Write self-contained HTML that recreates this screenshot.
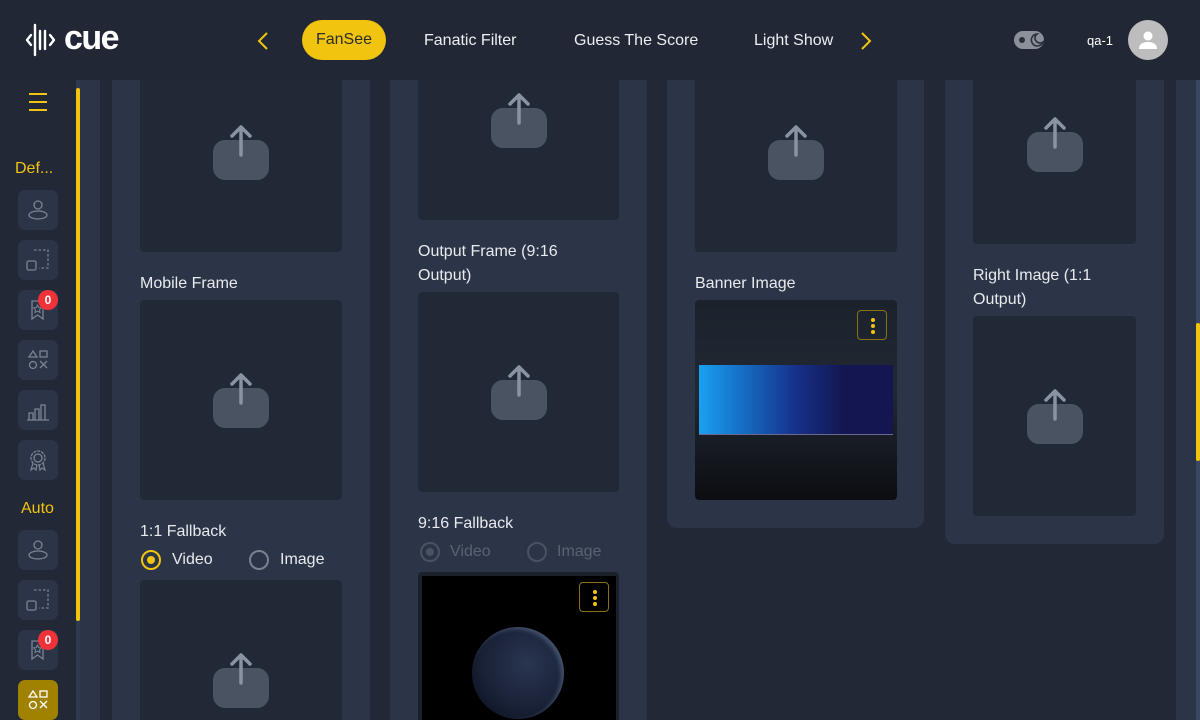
<!DOCTYPE html>
<html><head><meta charset="utf-8"><style>
*{box-sizing:border-box;margin:0;padding:0}
html,body{width:1200px;height:720px;overflow:hidden}
body{background:#222836;font-family:"Liberation Sans",sans-serif;position:relative;color:#e8eaee}
.a{position:absolute}
.hdr{left:0;top:0;width:1200px;height:80px;background:#212734;z-index:5}
.hz{z-index:6}
.nav{font-size:16px;color:#eceef2;top:32px}
.main{position:absolute;left:0;top:80px;width:1200px;height:640px;overflow:hidden}
.m{position:absolute;left:0;top:-80px;width:1200px;height:720px;overflow:hidden}
.card{background:#2c3547;border-radius:0 0 10px 10px}
.box{background:#222936;border-radius:4px}
.box svg{position:absolute;left:50%;top:50%;margin-left:-28px;margin-top:-28px}
.lbl{font-size:16px;color:#e8eaee;line-height:24px}
.sb{width:40px;height:40px;left:18px;background:#2c3547;border-radius:7px}
.sb svg{position:absolute;left:8px;top:8px}
.badge{width:20px;height:20px;border-radius:10px;background:#f0323a;color:#fff;font-size:12px;text-align:center;line-height:20px;font-weight:bold}
.rad{width:20px;height:20px;border-radius:50%;border:2px solid #7b828e}
.kebab{width:30px;height:30px;border:1px solid #8a7114;border-radius:4px}
.kebab i{position:absolute;left:13px;width:4px;height:4px;border-radius:2px;background:#f1c40f}
</style></head><body>
<svg width="0" height="0" style="position:absolute"><defs>
<g id="up"><rect x="0" y="16" width="56" height="40" rx="12" fill="#4a5362"/><path d="M28 31V4M19 12l9-9 9 9" stroke="#8a93a3" stroke-width="3.5" fill="none" stroke-linecap="round" stroke-linejoin="round"/></g>
</defs></svg>

<div class="a hdr"></div>
<svg class="a hz" style="left:25px;top:22px" width="100" height="36" viewBox="0 0 100 36">
<path d="M6 13l-4 5 4 5M10 3v30M15 9v18M20 9v18M25 13l4 5-4 5" stroke="#fff" stroke-width="2.4" fill="none" stroke-linecap="round" stroke-linejoin="round"/>
<text x="39" y="27" font-family="Liberation Sans" font-weight="bold" font-size="34" fill="#fff" letter-spacing="-1.5">cue</text>
</svg>
<svg class="a hz" style="left:257px;top:32px" width="12" height="18"><path d="M10 1L2 9l8 8" stroke="#f1c40f" stroke-width="2" fill="none"/></svg>
<div class="a hz" style="left:302px;top:20px;width:84px;height:40px;border-radius:20px;background:#f1c40f;color:#2b2b2b;font-size:16px;text-align:center;line-height:40px">FanSee</div>
<div class="a nav hz" style="left:424px">Fanatic Filter</div>
<div class="a nav hz" style="left:574px">Guess The Score</div>
<div class="a nav hz" style="left:754px">Light Show</div>
<svg class="a hz" style="left:860px;top:32px" width="12" height="18"><path d="M2 1l8 8-8 8" stroke="#f1c40f" stroke-width="2" fill="none"/></svg>
<div class="a hz" style="left:1014px;top:31px;width:30px;height:18px;border-radius:9px;background:#8b909a"></div>
<div class="a hz" style="left:1019px;top:37px;width:6px;height:6px;border-radius:3px;background:#2a2f3a"></div>
<svg class="a hz" style="left:1028px;top:32px" width="16" height="16"><path d="M9 2a6 6 0 1 0 6 8a5 5 0 0 1-6-8z" fill="none" stroke="#2a2f3a" stroke-width="1.6"/></svg>
<div class="a hz" style="left:1087px;top:33px;font-size:13px;color:#fff">qa-1</div>
<div class="a hz" style="left:1128px;top:20px;width:40px;height:40px;border-radius:50%;background:#bdbdbd"></div>
<svg class="a hz" style="left:1136px;top:28px" width="24" height="24"><circle cx="12" cy="8" r="4.5" fill="#fff"/><path d="M3 21c0-5 4-7 9-7s9 2 9 7z" fill="#fff"/></svg>

<div class="main"><div class="m">
<div class="a" style="left:76px;top:80px;width:4px;height:640px;background:#2f3a4f"></div>
<div class="a" style="left:76px;top:88px;width:4px;height:533px;background:#f1c40f;border-radius:2px"></div>
<div class="a" style="left:80px;top:80px;width:20px;height:640px;background:#2c3547"></div>
<div class="a" style="left:29px;top:93px;width:18px;height:2px;background:#f1c40f;box-shadow:0 8px 0 #f1c40f,0 16px 0 #f1c40f"></div>
<div class="a" style="left:15px;top:160px;font-size:16px;color:#f1c40f">Def...</div>
<div class="a sb" style="top:190px"><svg width="24" height="24"><circle cx="12" cy="7" r="4" fill="none" stroke="#7b8392" stroke-width="1.3"/><ellipse cx="12" cy="17" rx="9" ry="4" fill="none" stroke="#7b8392" stroke-width="1.3"/></svg></div>
<div class="a sb" style="top:240px"><svg width="24" height="24"><rect x="1" y="13" width="9" height="9" rx="1.5" fill="none" stroke="#7b8392" stroke-width="1.3"/><path d="M8 2h14v18h-9" fill="none" stroke="#7b8392" stroke-width="1.3" stroke-dasharray="2.5 2"/></svg></div>
<div class="a sb" style="top:290px"><svg width="24" height="24"><path d="M6 3h11v18l-5.5-4L6 21z" fill="none" stroke="#7b8392" stroke-width="1.3"/><path d="M11.5 7l1.3 2.6 2.7.3-2 1.9.5 2.7-2.5-1.3-2.5 1.3.5-2.7-2-1.9 2.7-.3z" fill="none" stroke="#7b8392" stroke-width="1"/></svg></div>
<div class="a badge" style="left:38px;top:290px">0</div>
<div class="a sb" style="top:340px"><svg width="24" height="24"><path d="M7 3l4 6H3z" fill="none" stroke="#7b8392" stroke-width="1.3"/><rect x="14" y="3" width="7" height="6" fill="none" stroke="#7b8392" stroke-width="1.3"/><circle cx="7" cy="17" r="3.5" fill="none" stroke="#7b8392" stroke-width="1.3"/><path d="M14 13l7 7M21 13l-7 7" stroke="#7b8392" stroke-width="1.3"/></svg></div>
<div class="a sb" style="top:390px"><svg width="24" height="24"><path d="M1 22h22M3 22v-7h4v7M9 22V11h4v11M15 22V7h4v15" fill="none" stroke="#7b8392" stroke-width="1.3"/></svg></div>
<div class="a sb" style="top:440px"><svg width="24" height="24"><circle cx="12" cy="10" r="7" fill="none" stroke="#7b8392" stroke-width="1.3" stroke-dasharray="3 1"/><circle cx="12" cy="10" r="4" fill="none" stroke="#7b8392" stroke-width="1.3"/><path d="M7 15l-2 7 3-2 2 2 1-5M17 15l2 7-3-2-2 2-1-5" fill="none" stroke="#7b8392" stroke-width="1.2"/></svg></div>
<div class="a" style="left:21px;top:500px;font-size:16px;color:#f1c40f">Auto</div>
<div class="a sb" style="top:530px"><svg width="24" height="24"><circle cx="12" cy="7" r="4" fill="none" stroke="#7b8392" stroke-width="1.3"/><ellipse cx="12" cy="17" rx="9" ry="4" fill="none" stroke="#7b8392" stroke-width="1.3"/></svg></div>
<div class="a sb" style="top:580px"><svg width="24" height="24"><rect x="1" y="13" width="9" height="9" rx="1.5" fill="none" stroke="#7b8392" stroke-width="1.3"/><path d="M8 2h14v18h-9" fill="none" stroke="#7b8392" stroke-width="1.3" stroke-dasharray="2.5 2"/></svg></div>
<div class="a sb" style="top:630px"><svg width="24" height="24"><path d="M6 3h11v18l-5.5-4L6 21z" fill="none" stroke="#7b8392" stroke-width="1.3"/><path d="M11.5 7l1.3 2.6 2.7.3-2 1.9.5 2.7-2.5-1.3-2.5 1.3.5-2.7-2-1.9 2.7-.3z" fill="none" stroke="#7b8392" stroke-width="1"/></svg></div>
<div class="a badge" style="left:38px;top:630px">0</div>
<div class="a sb" style="top:680px;background:#a08200"><svg width="24" height="24"><path d="M7 3l4 6H3z" fill="none" stroke="#fff" stroke-width="1.3"/><rect x="14" y="3" width="7" height="6" fill="none" stroke="#fff" stroke-width="1.3"/><circle cx="7" cy="17" r="3.5" fill="none" stroke="#fff" stroke-width="1.3"/><path d="M14 13l7 7M21 13l-7 7" stroke="#fff" stroke-width="1.3"/></svg></div>

<div class="a card" style="left:112px;top:80px;width:258px;height:640px;border-radius:0"></div>
<div class="a card" style="left:390px;top:80px;width:257px;height:640px;border-radius:0"></div>
<div class="a card" style="left:667px;top:80px;width:257px;height:448px"></div>
<div class="a card" style="left:945px;top:80px;width:219px;height:464px"></div>
<div class="a" style="left:1176px;top:80px;width:20px;height:640px;background:#2c3547"></div>
<div class="a" style="left:1196px;top:80px;width:4px;height:640px;background:#3a4760"></div>
<div class="a" style="left:1196px;top:323px;width:4px;height:138px;background:#f1c40f;border-radius:2px"></div>

<div class="a box" style="left:140px;top:52px;width:202px;height:200px"><svg width="56" height="56"><use href="#up"/></svg></div>
<div class="a lbl" style="left:140px;top:272px">Mobile Frame</div>
<div class="a box" style="left:140px;top:300px;width:202px;height:200px"><svg width="56" height="56"><use href="#up"/></svg></div>
<div class="a lbl" style="left:140px;top:520px">1:1 Fallback</div>
<div class="a rad" style="left:141px;top:550px;border-color:#f1c40f"></div>
<div class="a" style="left:147px;top:556px;width:8px;height:8px;border-radius:4px;background:#f1c40f"></div>
<div class="a lbl" style="left:172px;top:548px">Video</div>
<div class="a rad" style="left:249px;top:550px"></div>
<div class="a lbl" style="left:280px;top:548px">Image</div>
<div class="a box" style="left:140px;top:580px;width:202px;height:140px;border-radius:4px 4px 0 0"><svg width="56" height="56" style="margin-top:0;top:72px"><use href="#up"/></svg></div>

<div class="a box" style="left:418px;top:20px;width:201px;height:200px"><svg width="56" height="56"><use href="#up"/></svg></div>
<div class="a lbl" style="left:418px;top:240px">Output Frame (9:16<br>Output)</div>
<div class="a box" style="left:418px;top:292px;width:201px;height:200px"><svg width="56" height="56"><use href="#up"/></svg></div>
<div class="a lbl" style="left:418px;top:512px">9:16 Fallback</div>
<div class="a rad" style="left:420px;top:542px;border-color:#4a5262"></div>
<div class="a" style="left:426px;top:548px;width:8px;height:8px;border-radius:4px;background:#4a5262"></div>
<div class="a lbl" style="left:450px;top:540px;color:#5a6272">Video</div>
<div class="a rad" style="left:527px;top:542px;border-color:#4a5262"></div>
<div class="a lbl" style="left:557px;top:540px;color:#5a6272">Image</div>
<div class="a" style="left:418px;top:572px;width:201px;height:148px;background:#1b2029;border-radius:4px 4px 0 0"></div>
<div class="a" style="left:422px;top:576px;width:194px;height:144px;background:#000"></div>
<div class="a" style="left:472px;top:627px;width:92px;height:92px;border-radius:50%;background:radial-gradient(circle at 60% 40%,#2a3550 0%,#1a2238 55%,#101626 80%);box-shadow:-3px 2px 4px rgba(140,170,200,.35) inset"></div>
<div class="a kebab" style="left:579px;top:582px"><i style="top:7px"></i><i style="top:13px"></i><i style="top:19px"></i></div>

<div class="a box" style="left:695px;top:52px;width:202px;height:200px"><svg width="56" height="56"><use href="#up"/></svg></div>
<div class="a lbl" style="left:695px;top:272px">Banner Image</div>
<div class="a" style="left:695px;top:300px;width:202px;height:200px;border-radius:4px;background:linear-gradient(#1c222c,#222833 45%,#0b0d11)"></div>
<div class="a" style="left:699px;top:365px;width:194px;height:70px;background:linear-gradient(90deg,#1aa0f0 0%,#1673c8 20%,#17308a 50%,#131650 75%);border-bottom:1px solid #6a6a90"></div>
<div class="a kebab" style="left:857px;top:310px"><i style="top:7px"></i><i style="top:13px"></i><i style="top:19px"></i></div>

<div class="a box" style="left:973px;top:44px;width:163px;height:200px"><svg width="56" height="56"><use href="#up"/></svg></div>
<div class="a lbl" style="left:973px;top:264px">Right Image (1:1<br>Output)</div>
<div class="a box" style="left:973px;top:316px;width:163px;height:200px"><svg width="56" height="56"><use href="#up"/></svg></div>
</div></div>
</body></html>
